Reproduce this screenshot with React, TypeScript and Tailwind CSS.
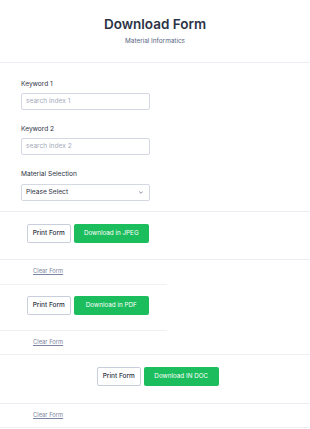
import React from "react";

function Field({ label, placeholder }: { label: string; placeholder: string }) {
  return (
    <div className="flex flex-col">
      <label className="text-[6.6px] leading-[10px] font-normal text-[#2c3345]">{label}</label>
      <div className="mt-[4px] w-[129px] h-[17px] border border-[#d3d8e2] rounded-[2px] flex items-center pl-[4px] text-[6.6px] text-[#a3aab9]">
        {placeholder}
      </div>
    </div>
  );
}

function Buttons({ label }: { label: string }) {
  return (
    <div className="flex gap-[3.5px]">
      <button className="w-[43.5px] h-[19px] border border-[#c8cedb] rounded-[2px] bg-white text-[6.5px] font-medium text-[#2c3345] flex items-center justify-center">
        Print Form
      </button>
      <button className="w-[74.5px] h-[19px] rounded-[2px] bg-[#1cbd5d] text-[6.3px] font-normal text-white flex items-center justify-center">
        {label}
      </button>
    </div>
  );
}

function Clear({ full }: { full: boolean }) {
  return (
    <div className={(full ? "w-full h-[24px] " : "w-[167px] h-[25px] ") + "border-b border-[#eef0f4] pl-[33px] pt-[7px]"}>
      <span className="text-[5.8px] leading-[7px] underline text-[#7a85a0] block">Clear Form</span>
    </div>
  );
}

export default function App() {
  return (
    <div className="w-[310px] h-[429px] overflow-hidden bg-white font-['Inter',sans-serif]">
      <header className="h-[63px] border-b border-[#eceef3] flex flex-col items-center pt-[15px]">
        <h1 className="text-[13.5px] leading-[18px] font-semibold text-[#2c3345]">Download Form</h1>
        <p className="text-[6.4px] leading-[9px] mt-[3.5px] text-[#57647e]">Material Informatics</p>
      </header>
      <section className="pl-[21px] pt-[16px] pb-[10px] border-b border-[#eceef3] flex flex-col gap-[14px]">
        <Field label="Keyword 1" placeholder="search index 1" />
        <Field label="Keyword 2" placeholder="search index 2" />
        <div className="flex flex-col">
          <label className="text-[6.6px] leading-[10px] font-normal text-[#2c3345]">Material Selection</label>
          <div className="mt-[5px] w-[129px] h-[17px] border border-[#d3d8e2] rounded-[2px] flex items-center justify-between pl-[4px] pr-[6.5px] text-[6.6px] text-[#2c3345]">
            <span>Please Select</span>
            <svg width="4" height="3" viewBox="0 0 10 6" fill="none">
              <path d="M1 1l4 4 4-4" stroke="#57647e" strokeWidth="1.8" strokeLinecap="round" strokeLinejoin="round" />
            </svg>
          </div>
        </div>
      </section>
      <div className="pl-[27px] pt-[12px] pb-[16px] border-b border-[#eceef3]">
        <Buttons label="Download in JPEG" />
      </div>
      <Clear full={false} />
      <div className="w-[167px] pl-[27px] pt-[11px] pb-[15px] border-b border-[#eef0f4]">
        <Buttons label="Download in PDF" />
      </div>
      <Clear full={true} />
      <div className="pl-[97px] pt-[12px] pb-[17px] border-b border-[#eceef3]">
        <Buttons label="Download IN DOC" />
      </div>
      <Clear full={true} />
    </div>
  );
}
